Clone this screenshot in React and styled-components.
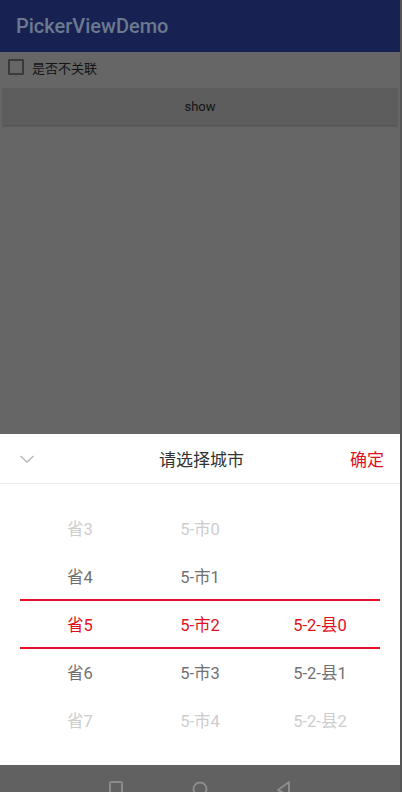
import React from 'react'
import styled, { createGlobalStyle } from 'styled-components'

const GlobalStyle = createGlobalStyle`
  html, body { margin: 0; padding: 0; }
  body {
    background: #555555;
    font-family: Roboto, "Noto Sans CJK SC", sans-serif;
    overflow: hidden;
  }
`

const provinces = [
  { text: '省3', level: 2 },
  { text: '省4', level: 1 },
  { text: '省5', level: 0 },
  { text: '省6', level: 1 },
  { text: '省7', level: 2 },
]
const cities = [
  { text: '5-市0', level: 2 },
  { text: '5-市1', level: 1 },
  { text: '5-市2', level: 0 },
  { text: '5-市3', level: 1 },
  { text: '5-市4', level: 2 },
]
const counties = [
  { text: '', level: 2 },
  { text: '', level: 1 },
  { text: '5-2-县0', level: 0 },
  { text: '5-2-县1', level: 1 },
  { text: '5-2-县2', level: 2 },
]

const Screen = styled.div`
  width: 400px;
  height: 792px;
  display: flex;
  flex-direction: column;
  background: #666666;
`
const AppBar = styled.div`
  height: 52px;
  background: #172252;
  display: flex;
  align-items: center;
  padding-left: 16px;
  color: #6b7a8f;
  font-size: 20px;
  font-weight: 500;
`
const Content = styled.div`
  flex: 1;
  display: flex;
  flex-direction: column;
`
const CheckRow = styled.div`
  height: 30px;
  display: flex;
  align-items: center;
  padding-left: 8px;
  gap: 8px;
  font-size: 13px;
  color: #141414;
`
const Box = styled.div`
  width: 12px;
  height: 12px;
  border: 2px solid #3a3a3a;
  border-radius: 1px;
`
const ShowButton = styled.div`
  margin: 6px 3px 0 3px;
  height: 37px;
  background: #5d5d5d;
  box-shadow: 0 1px 2px rgba(0, 0, 0, 0.25);
  display: flex;
  align-items: center;
  justify-content: center;
  font-size: 13px;
  color: #141414;
`
const Spacer = styled.div`
  flex: 1;
`
const Sheet = styled.div`
  background: #ffffff;
  height: 331px;
  display: flex;
  flex-direction: column;
`
const Header = styled.div`
  height: 49px;
  border-bottom: 1px solid #ececec;
  display: grid;
  grid-template-columns: 1fr auto 1fr;
  align-items: center;
  padding: 0 16px 0 19px;
`
const Title = styled.div`
  font-size: 17px;
  color: #333333;
`
const Confirm = styled.div`
  font-size: 17px;
  color: #e0101e;
  justify-self: end;
`
const Wheels = styled.div`
  position: relative;
  display: grid;
  grid-template-columns: repeat(3, 120px);
  padding: 20px 20px 0 20px;
`
const Column = styled.div`
  display: flex;
  flex-direction: column;
`
const Cell = styled.div`
  height: 48px;
  display: flex;
  align-items: center;
  justify-content: center;
  font-size: 16.5px;
  color: ${(p) => (p.$level === 0 ? '#e0101e' : p.$level === 1 ? '#717171' : '#cdcdcd')};
`
const Divider = styled.div`
  position: absolute;
  left: 20px;
  right: 20px;
  top: ${(p) => p.$top}px;
  height: 1.5px;
  background: #e0102a;
`
const NavBar = styled.div`
  height: 27px;
  background: #616161;
  display: flex;
  align-items: flex-start;
  justify-content: center;
  gap: 68px;
  padding-top: 15px;
  box-sizing: border-box;
  overflow: hidden;
`

const Wheel = ({ items }) => (
  <Column>
    {items.map((it, i) => (
      <Cell key={i} $level={it.level}>{it.text}</Cell>
    ))}
  </Column>
)

export default function App() {
  return (
    <>
      <GlobalStyle />
      <Screen>
        <AppBar>PickerViewDemo</AppBar>
        <Content>
          <CheckRow>
            <Box />
            <span>是否不关联</span>
          </CheckRow>
          <ShowButton>show</ShowButton>
          <Spacer />
          <Sheet>
            <Header>
              <svg width="16" height="10" viewBox="0 0 16 10">
                <path d="M1.5 2 L8 8 L14.5 2" fill="none" stroke="#b5b5b5" strokeWidth="1.3" />
              </svg>
              <Title>请选择城市</Title>
              <Confirm>确定</Confirm>
            </Header>
            <Wheels>
              <Wheel items={provinces} />
              <Wheel items={cities} />
              <Wheel items={counties} />
              <Divider $top={115} />
              <Divider $top={163} />
            </Wheels>
          </Sheet>
          <NavBar>
            <svg width="16" height="16" viewBox="0 0 16 16">
              <rect x="2" y="2" width="12" height="14" rx="1.5" fill="none" stroke="#8c8c8c" strokeWidth="2" />
            </svg>
            <svg width="16" height="16" viewBox="0 0 16 16">
              <circle cx="8" cy="9" r="6.5" fill="none" stroke="#8c8c8c" strokeWidth="2" />
            </svg>
            <svg width="16" height="16" viewBox="0 0 16 16">
              <path d="M13 2 L2 10 L13 16 Z" fill="none" stroke="#8c8c8c" strokeWidth="2" strokeLinejoin="round" />
            </svg>
          </NavBar>
        </Content>
      </Screen>
    </>
  )
}
